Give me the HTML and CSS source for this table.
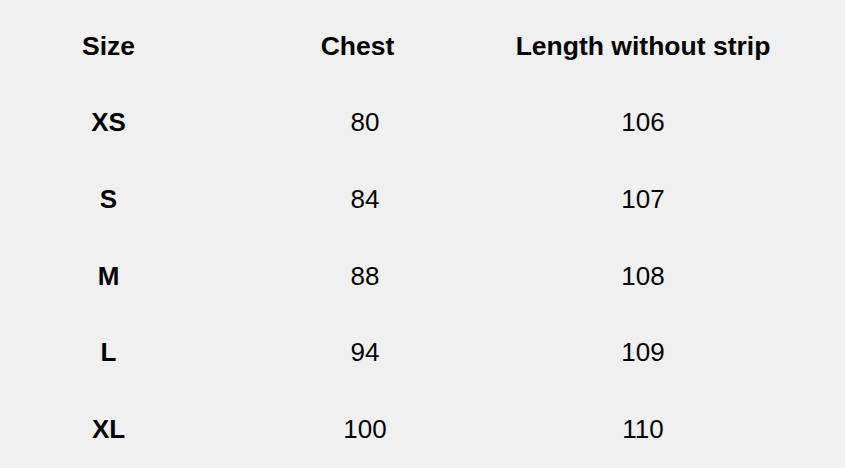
FILE: index.html
```html
<!DOCTYPE html>
<html lang="en">
<head>
<meta charset="utf-8">
<title>Size chart</title>
<link rel="stylesheet" href="styles.css">
</head>
<body>
<div class="chart">
  <div class="cell head">Size</div>
  <div class="cell head chest-head">Chest</div>
  <div class="cell head">Length without strip</div>

  <div class="cell size">XS</div>
  <div class="cell">80</div>
  <div class="cell">106</div>

  <div class="cell size">S</div>
  <div class="cell">84</div>
  <div class="cell">107</div>

  <div class="cell size">M</div>
  <div class="cell">88</div>
  <div class="cell">108</div>

  <div class="cell size">L</div>
  <div class="cell">94</div>
  <div class="cell">109</div>

  <div class="cell size">XL</div>
  <div class="cell">100</div>
  <div class="cell">110</div>
</div>
</body>
</html>
```
FILE: styles.css
```css
html, body {
  margin: 0;
  padding: 0;
  background: #f0f0f0;
}

body {
  width: 845px;
  height: 468px;
  overflow: hidden;
  font-family: "Liberation Sans", Arial, sans-serif;
  color: #050505;
}

.chart {
  display: grid;
  grid-template-columns: 217px 296px 260px;
  grid-auto-rows: 76.6px;
  align-items: center;
  padding-top: 8px;
}

.cell {
  font-size: 26px;
  text-align: center;
  white-space: nowrap;
}

.head,
.size {
  font-weight: bold;
}

.head {
  font-size: 26.5px;
}

.chest-head {
  padding-right: 15px;
}
```
